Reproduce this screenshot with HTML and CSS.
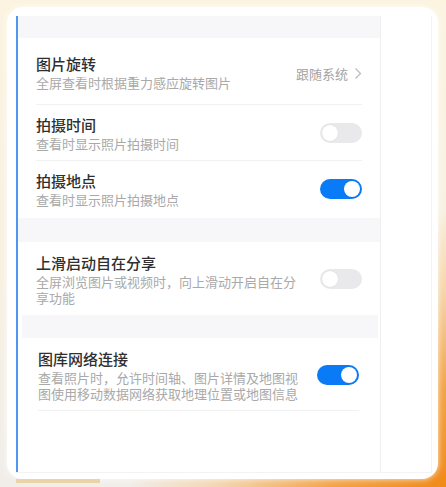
FILE: index.html
```html
<!DOCTYPE html>
<html lang="zh-CN">
<head>
    <meta charset="UTF-8">
    <meta name="viewport" content="width=device-width, initial-scale=1.0">
    <title>图库设置</title>
    <link rel="stylesheet" href="styles.css">
</head>
<body>
    <div class="screen">
        <div class="card">
            <div class="frame">
                <div class="panel">
                    <div class="band band-top"></div>

                    <div class="section">
                        <div class="row row-first">
                            <div class="text">
                                <div class="title">图片旋转</div>
                                <div class="desc">全屏查看时根据重力感应旋转图片</div>
                            </div>
                            <div class="value">
                                跟随系统
                                <svg class="chevron" width="8" height="13" viewBox="0 0 8 13">
                                    <polyline points="1.5,1.5 6.5,6.5 1.5,11.5" fill="none" stroke="#bdbdbd" stroke-width="1.3"/>
                                </svg>
                            </div>
                        </div>
                        <div class="row">
                            <div class="text">
                                <div class="title">拍摄时间</div>
                                <div class="desc">查看时显示照片拍摄时间</div>
                            </div>
                            <span class="switch"></span>
                        </div>
                        <div class="row no-line">
                            <div class="text">
                                <div class="title">拍摄地点</div>
                                <div class="desc">查看时显示照片拍摄地点</div>
                            </div>
                            <span class="switch on"></span>
                        </div>
                    </div>

                    <div class="band"></div>

                    <div class="section">
                        <div class="row row-tall no-line">
                            <div class="text">
                                <div class="title">上滑启动自在分享</div>
                                <div class="desc">全屏浏览图片或视频时，向上滑动开启自在分享功能</div>
                            </div>
                            <span class="switch"></span>
                        </div>
                    </div>

                    <div class="band band-inset"></div>

                    <div class="section section-last">
                        <div class="row row-tall shifted">
                            <div class="text">
                                <div class="title">图库网络连接</div>
                                <div class="desc">查看照片时，允许时间轴、图片详情及地图视图使用移动数据网络获取地理位置或地图信息</div>
                            </div>
                            <span class="switch on"></span>
                        </div>
                    </div>
                </div>
                <div class="side"></div>
            </div>
        </div>
        <div class="strip"></div>
    </div>
</body>
</html>
```

FILE: styles.css
```css
html, body {
    margin: 0;
    padding: 0;
}
body {
    width: 446px;
    height: 487px;
    overflow: hidden;
    font-family: "Noto Sans CJK SC", "Noto Sans", sans-serif;
    background:
        radial-gradient(ellipse 320px 280px at 100% 100%, #f08a18 0, #f3a448 35%, rgba(245, 196, 132, 0.6) 70%, rgba(248, 220, 180, 0) 100%),
        linear-gradient(180deg, #fcf4e1 0, #f7f0e3 60%, #f1eeea 100%);
}
.screen {
    position: relative;
    padding: 7px 8px 9px 7px;
}
.card {
    background: #fff;
    border-radius: 16px;
    padding: 9px 6px 6px 9px;
    box-shadow: 0 0 6px rgba(255, 255, 255, 0.8);
}
.frame {
    display: flex;
    height: 456px;
    border-right: 1px solid #f3f3f3;
    border-bottom: 1px solid #f3f3f3;
}
.panel {
    width: 362px;
    border-left: 2px solid #4f95f2;
    border-right: 1px solid #efefef;
    display: flex;
    flex-direction: column;
}
.side {
    flex: 1;
}
.band {
    height: 24px;
    background: #f7f7f9;
}
.band-top {
    height: 22px;
}
.band-inset {
    height: 23px;
    margin: 0 2px 0 4px;
}
.section {
    background: #fff;
    padding: 0 18px;
}
.section-last {
    flex: 1;
}
.row {
    display: flex;
    align-items: center;
    justify-content: space-between;
    padding: 9px 0 8px;
    border-bottom: 1px solid #f1f1f1;
}
.row-first {
    padding: 15px 0 13px;
}
.row.no-line {
    border-bottom: none;
    padding-bottom: 10px;
}
.row-tall {
    padding-top: 10px;
}
.row-tall.no-line {
    padding-bottom: 9px;
}
.row.shifted {
    margin: 0 3px 0 2px;
}
.text {
    max-width: 264px;
}
.title {
    font-size: 15px;
    line-height: 22px;
    font-weight: 500;
    color: #2f2f2f;
}
.desc {
    font-size: 13px;
    line-height: 16px;
    color: #a9a9a9;
}
.value {
    display: flex;
    align-items: center;
    gap: 6px;
    font-size: 13px;
    color: #a3a3a3;
    margin-top: 2px;
}
.chevron {
    display: block;
}
.switch {
    position: relative;
    width: 42px;
    height: 20px;
    border-radius: 10px;
    background: #e9e9eb;
    flex-shrink: 0;
}
.switch::after {
    content: "";
    position: absolute;
    top: 2px;
    left: 2px;
    width: 16px;
    height: 16px;
    border-radius: 50%;
    background: #fff;
    box-shadow: 0 0 1px rgba(0, 0, 0, 0.15);
}
.switch.on {
    background: #0a7bf7;
}
.switch.on::after {
    left: 24px;
}
.strip {
    position: absolute;
    left: 16px;
    top: 479px;
    width: 84px;
    height: 4px;
    background: #ead3a6;
}
```
